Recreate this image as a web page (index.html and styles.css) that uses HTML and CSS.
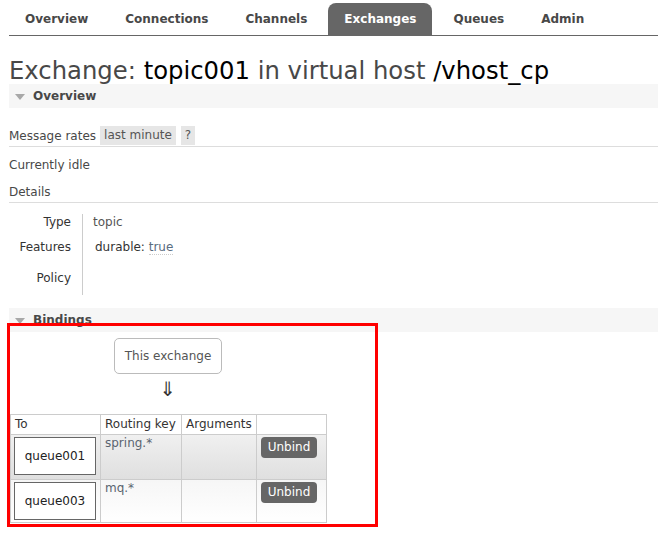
FILE: index.html
```html
<!DOCTYPE html>
<html>
<head>
<meta charset="utf-8">
<link rel="stylesheet" href="styles.css">
</head>
<body>
<div class="page">
  <ul class="tabs">
    <li class="tab">Overview</li>
    <li class="tab">Connections</li>
    <li class="tab">Channels</li>
    <li class="tab active">Exchanges</li>
    <li class="tab">Queues</li>
    <li class="tab">Admin</li>
  </ul>

  <h1 class="title">Exchange: <b>topic001</b> in virtual host <b>/vhost_cp</b></h1>

  <div class="section-head"><span class="tri"></span>Overview</div>

  <div class="rates">
    <span>Message rates</span>
    <span class="pill">last minute</span>
    <span class="pill q">?</span>
  </div>

  <p class="idle">Currently idle</p>
  <div class="details-head">Details</div>

  <div class="facts">
    <div class="fk r1">Type</div><div class="fv r1">topic</div>
    <div class="fk r2">Features</div><div class="fv r2 indent"><span>durable: <span class="true">true</span></span></div>
    <div class="fk r3">Policy</div><div class="fv r3"></div>
  </div>

  <div class="bindings">
    <div class="section-head"><span class="tri"></span>Bindings</div>
    <div class="flow">
      <div class="this-ex">This exchange</div>
      <div class="arrow">⇓</div>
    </div>
    <table class="btable">
      <tr class="hdr"><th class="c1">To</th><th class="c2">Routing key</th><th class="c3">Arguments</th><th class="c4"></th></tr>
      <tr class="row a"><td><div class="qbox">queue001</div></td><td class="key">spring.*</td><td></td><td><span class="btn">Unbind</span></td></tr>
      <tr class="row b"><td><div class="qbox">queue003</div></td><td class="key">mq.*</td><td></td><td><span class="btn">Unbind</span></td></tr>
    </table>
    <div class="highlight"></div>
  </div>
</div>
</body>
</html>
```

FILE: styles.css
```css
* { box-sizing: border-box; }
html, body { margin: 0; padding: 0; background: #fff; }
body {
  font-family: "DejaVu Sans", Verdana, sans-serif;
  font-size: 12px;
  color: #484848;
}
.page { padding: 3px 0 20px 9px; }

.tabs {
  list-style: none;
  margin: 0;
  padding: 0;
  display: flex;
  border-bottom: 1px solid #666;
  height: 33px;
}
.tab {
  padding: 0 16px;
  margin-right: 5px;
  height: 32px;
  line-height: 32px;
  font-weight: bold;
  color: #484848;
  border-radius: 8px 8px 0 0;
}
.tab.active { background: #666; color: #fff; }

.title {
  margin: 21px 0 0 0;
  font-size: 24.3px;
  font-weight: normal;
  line-height: 27px;
  color: #484848;
}
.title b { font-weight: normal; color: #000; }

.section-head {
  background: #f6f6f6;
  height: 24px;
  line-height: 24px;
  font-weight: bold;
  color: #484848;
  display: flex;
  align-items: center;
}
.tri {
  width: 0; height: 0;
  border-left: 5px solid transparent;
  border-right: 5px solid transparent;
  border-top: 6px solid #a8a8a8;
  margin: 1px 8px 0 6px;
}

.rates {
  margin-top: 18px;
  display: flex;
  align-items: center;
  gap: 4px;
  border-bottom: 1px solid #ddd;
  padding-bottom: 1px;
  height: 21px;
}
.pill {
  background: #e6e6e6;
  color: #555;
  padding: 0 4px;
  height: 19px;
  line-height: 19px;
}
.pill.q { margin-left: 1px; }

.idle { margin: 10px 0 0 0; line-height: 16px; }
.details-head {
  margin-top: 11px;
  line-height: 16px;
  padding-bottom: 2px;
  border-bottom: 1px solid #ddd;
}

.facts {
  margin-top: 11px;
  display: grid;
  grid-template-columns: 73px auto;
}
.fk {
  padding-right: 11px;
  color: #333;
  display: flex;
  align-items: center;
  justify-content: flex-end;
}
.fv {
  border-left: 1px solid #ccc;
  padding-left: 10px;
  color: #555;
  display: flex;
  align-items: center;
}
.fv.indent { padding-left: 12px; color: #333; }
.r1 { height: 16px; }
.r2 { height: 34px; }
.r3 { height: 31px; align-items: flex-start; padding-top: 7px; }
.true { color: #5a6c80; border-bottom: 1px dotted #ccc; }

.bindings { position: relative; margin-top: 13px; }
.flow {
  width: 318px;
  display: flex;
  flex-direction: column;
  align-items: center;
  padding-top: 6px;
}
.this-ex {
  border: 1px solid #bbb;
  border-radius: 5px;
  width: 108px;
  height: 36px;
  line-height: 34px;
  text-align: center;
  color: #555;
}
.arrow {
  font-size: 20px;
  line-height: 24px;
  height: 30px;
  color: #333;
  margin-top: 3px;
}
.btable {
  border-collapse: collapse;
  margin: 7px 0 0 1px;
}
.btable th, .btable td {
  border: 1px solid #ccc;
  padding: 0;
  vertical-align: top;
  text-align: left;
}
.btable th {
  font-weight: normal;
  color: #333;
  height: 20px;
  line-height: 18px;
  padding: 0 4px;
  background: #fff;
}
.c1 { width: 90px; }
.c2 { width: 81px; }
.c3 { width: 75px; }
.c4 { width: 70px; }
.row.a { height: 45px; background: linear-gradient(#f0f0f0, #dfdfdf); }
.row.b { height: 43px; background: linear-gradient(#f6f6f6, #ffffff); }
.row td { padding: 2px 3px; }
.key { color: #5a6470; padding: 1px 4px !important; line-height: 15px; }
.qbox {
  width: 82px;
  height: 38px;
  border: 1px solid #666;
  background: #fff;
  color: #222;
  display: flex;
  align-items: center;
  justify-content: center;
}
.btn {
  display: inline-block;
  background: #666;
  color: #fff;
  border-radius: 4px;
  width: 56px;
  height: 21px;
  line-height: 21px;
  text-align: center;
  margin-left: 1px;
}
.highlight {
  position: absolute;
  left: -2px;
  top: 15px;
  width: 371px;
  height: 204px;
  border: 3px solid #f00;
  pointer-events: none;
}
```
